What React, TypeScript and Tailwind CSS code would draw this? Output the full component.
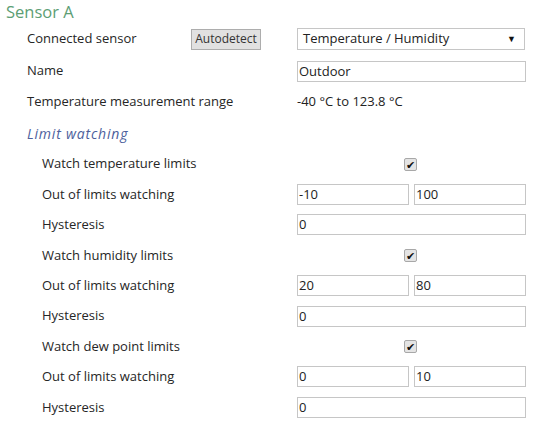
import React from 'react';

const font = { fontFamily: '"Open Sans", "Noto Sans", sans-serif' };

function Field({ value }: { value: string }) {
  return (
    <div className="h-[21px] flex-1 border border-[#c6c6c6] bg-white pl-px text-[13px] leading-[19px] text-[#222]">
      {value}
    </div>
  );
}

function Check() {
  return (
    <div className="flex w-[229px] justify-center">
      <span className="ml-[-3px] flex h-[13px] w-[13px] items-center justify-center rounded-[2px] border border-[#a8a8a8] bg-[#e4e4e4] text-[11px] leading-none text-[#111]">
        ✔
      </span>
    </div>
  );
}

function Row({
  label,
  indent,
  h = 'h-[30.4px]',
  children,
}: {
  label: React.ReactNode;
  indent?: boolean;
  h?: string;
  children?: React.ReactNode;
}) {
  return (
    <div className={`flex ${h} items-center`}>
      <div className={`${indent ? 'pl-[42px]' : 'pl-[27px]'} w-[297px] shrink-0 whitespace-nowrap text-[13px] text-[#262626]`}>
        {label}
      </div>
      {children}
    </div>
  );
}

function LimitGroup({ name, low, high }: { name: string; low: string; high: string }) {
  return (
    <>
      <Row label={name} indent>
        <Check />
      </Row>
      <Row label="Out of limits watching" indent>
        <div className="flex w-[229px] gap-[5px]">
          <Field value={low} />
          <Field value={high} />
        </div>
      </Row>
      <Row label="Hysteresis" indent>
        <div className="flex w-[229px]">
          <Field value="0" />
        </div>
      </Row>
    </>
  );
}

export default function App() {
  return (
    <div className="h-[426px] w-[536px] overflow-hidden bg-white" style={font}>
      <div className="flex h-[23px] items-center pl-[6px] pt-[2px] text-[16.5px] text-[#5c9e74]">
        Sensor A
      </div>

      {/* sensor settings */}
      <div className="flex h-[32px] items-center">
        <div className="w-[191px] shrink-0 pl-[27px] text-[13px] text-[#262626]">Connected sensor</div>
        <button className="flex h-[21px] w-[70px] items-center justify-center border border-[#adadad] bg-[#e1e1e1] text-[12px] text-[#333]">
          Autodetect
        </button>
        <div className="w-[36px]" />
        <div className="flex h-[22px] w-[228px] items-center justify-between border border-[#c6c6c6] bg-white pl-[5px] pr-[8px] text-[13px] text-[#222]">
          <span>Temperature / Humidity</span>
          <span className="text-[9px] text-[#111]">▼</span>
        </div>
      </div>
      <Row label="Name" h="h-[32px]">
        <div className="flex w-[229px]">
          <Field value="Outdoor" />
        </div>
      </Row>
      <Row label="Temperature measurement range" h="h-[30px]">
        <div className="text-[13px] text-[#222]">-40 °C to 123.8 °C</div>
      </Row>

      <div className="flex h-[32px] items-center pl-[27px] text-[14px] italic tracking-[0.8px] text-[#4d5f9c]">
        Limit watching
      </div>

      <LimitGroup name="Watch temperature limits" low="-10" high="100" />
      <LimitGroup name="Watch humidity limits" low="20" high="80" />
      <LimitGroup name="Watch dew point limits" low="0" high="10" />
    </div>
  );
}
